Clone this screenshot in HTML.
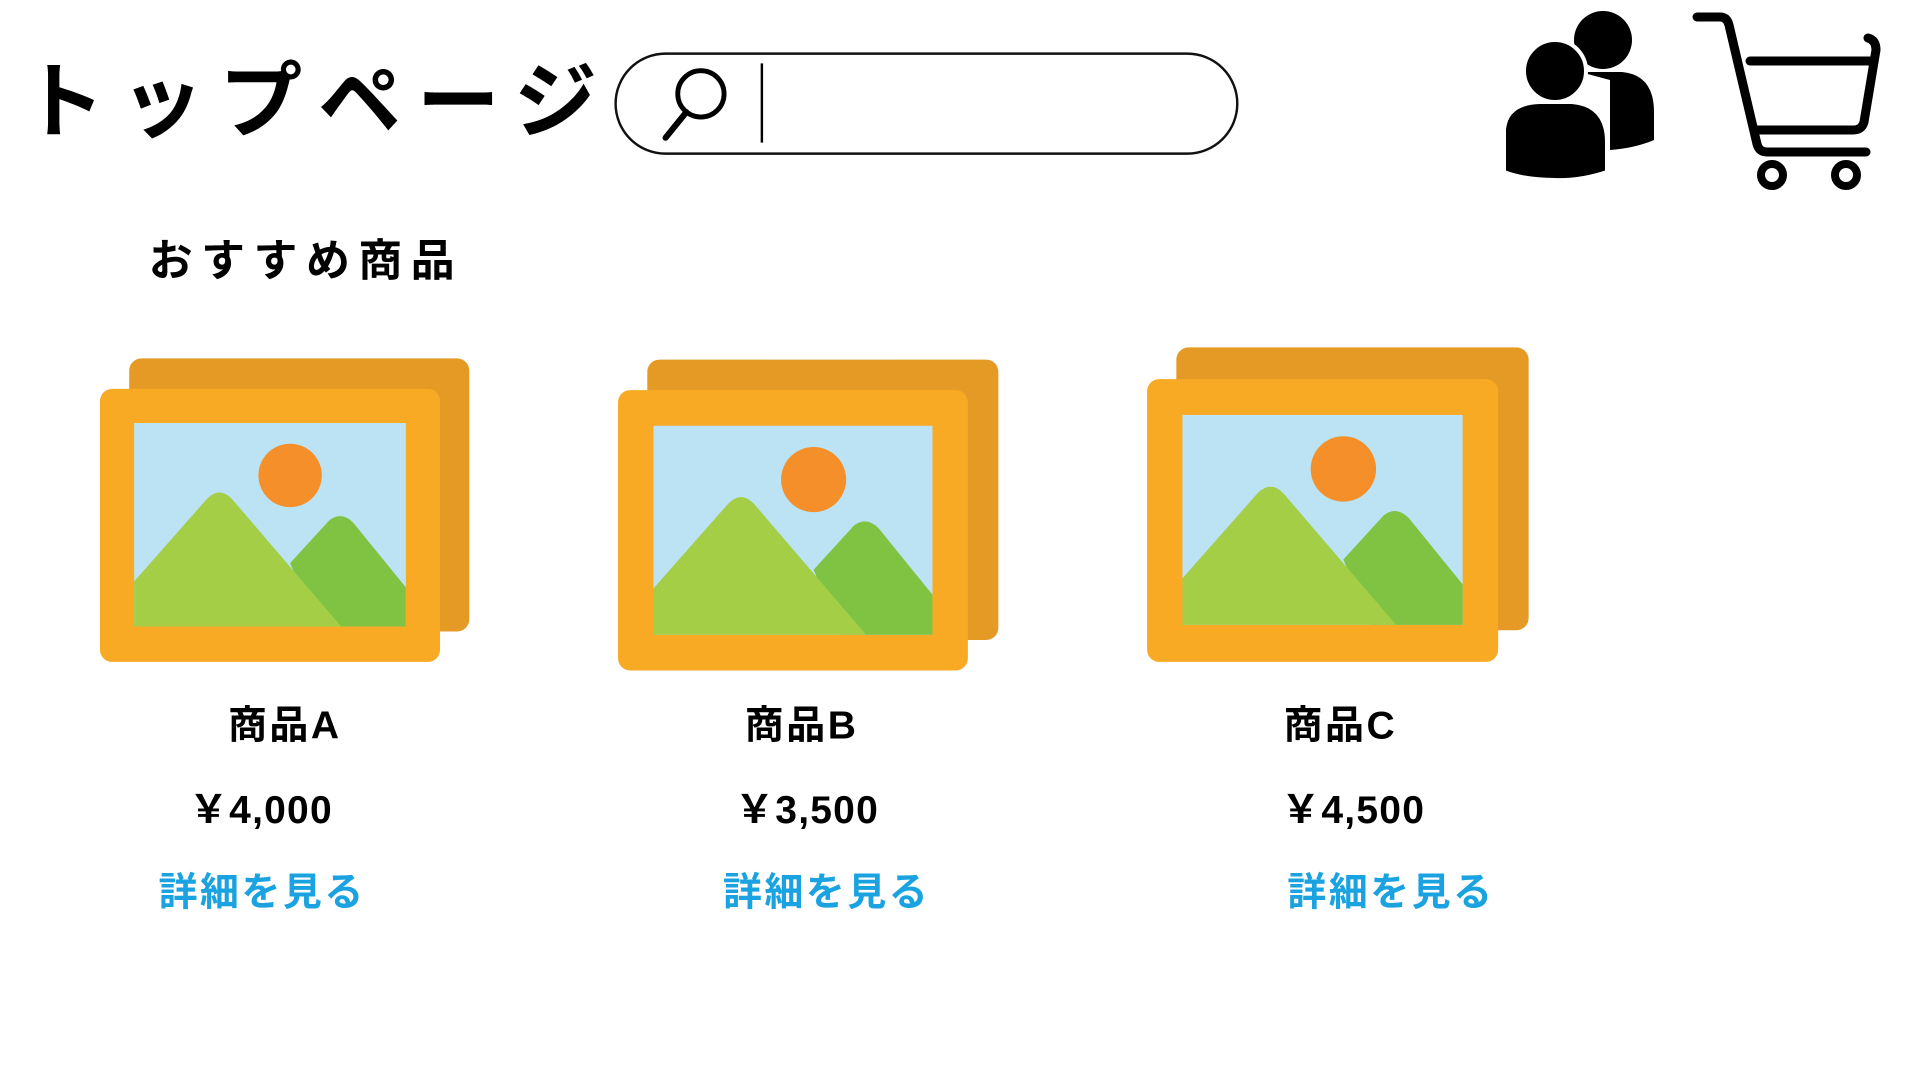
<!DOCTYPE html>
<html><head><meta charset="utf-8"><style>
body{margin:0;background:#fff;width:1911px;height:1071px;overflow:hidden;font-family:"Liberation Sans","Noto Sans CJK JP",sans-serif;}
#w{position:absolute;left:0;top:0;width:1560px;height:874px;transform:scale(1.219);transform-origin:0 0;}
.t{position:absolute;font-weight:bold;white-space:nowrap;}
</style></head><body>
<div id="w">
<div class="t" style="left:18px;top:28px;font-size:68px;letter-spacing:13px;">トップページ</div>
<div style="position:absolute;left:504px;top:43px;width:508px;height:80px;border:2px solid #111;border-radius:42px;"></div>
<svg style="position:absolute;left:0;top:0" width="1560" height="874">
<circle cx="575" cy="77" r="19" fill="none" stroke="#000" stroke-width="4"/>
<line x1="563" y1="92" x2="546" y2="113" stroke="#000" stroke-width="5" stroke-linecap="round"/>
<line x1="625" y1="52" x2="625" y2="117" stroke="#000" stroke-width="2"/>
<g>
<rect x="106" y="294" width="279" height="224" rx="10" fill="#e59a26"/>
<rect x="82" y="319" width="279" height="224" rx="10" fill="#f8aa24"/>
<svg x="110" y="347" width="223" height="167" viewBox="0 0 223 167"><rect width="223" height="167" fill="#bbe3f3"/><circle cx="128" cy="43" r="26" fill="#f58f2a"/><path d="M128,115 L160,80 Q170,72 180,82 L223,135 V167 H150 Z" fill="#80c242"/><path d="M0,130 L60,62 Q70,52 80,62 L170,167 H0 Z" fill="#a3ce46"/></svg>
</g>
<g>
<rect x="531" y="295" width="288" height="230" rx="10" fill="#e59a26"/>
<rect x="507" y="320" width="287" height="230" rx="10" fill="#f8aa24"/>
<svg x="536" y="349" width="229" height="172" viewBox="0 0 223 167"><rect width="223" height="167" fill="#bbe3f3"/><circle cx="128" cy="43" r="26" fill="#f58f2a"/><path d="M128,115 L160,80 Q170,72 180,82 L223,135 V167 H150 Z" fill="#80c242"/><path d="M0,130 L60,62 Q70,52 80,62 L170,167 H0 Z" fill="#a3ce46"/></svg>
</g>
<g>
<rect x="965" y="285" width="289" height="232" rx="10" fill="#e59a26"/>
<rect x="941" y="311" width="288" height="232" rx="10" fill="#f8aa24"/>
<svg x="970" y="340" width="230" height="173" viewBox="0 0 223 167"><rect width="223" height="167" fill="#bbe3f3"/><circle cx="128" cy="43" r="26" fill="#f58f2a"/><path d="M128,115 L160,80 Q170,72 180,82 L223,135 V167 H150 Z" fill="#80c242"/><path d="M0,130 L60,62 Q70,52 80,62 L170,167 H0 Z" fill="#a3ce46"/></svg>
</g>
</svg>
<div class="t" style="left:122px;top:185px;font-size:36px;letter-spacing:7px;">おすすめ商品</div>
<div class="t" style="left:187px;top:570px;font-size:32px;letter-spacing:2px;">商品A</div>
<div class="t" style="left:611px;top:570px;font-size:32px;letter-spacing:2px;">商品B</div>
<div class="t" style="left:1053px;top:570px;font-size:32px;letter-spacing:2px;">商品C</div>
<div class="t" style="left:155px;top:639px;font-size:32px;letter-spacing:1px;">￥4,000</div>
<div class="t" style="left:603px;top:639px;font-size:32px;letter-spacing:1px;">￥3,500</div>
<div class="t" style="left:1051px;top:639px;font-size:32px;letter-spacing:1px;">￥4,500</div>
<div class="t" style="left:130px;top:707px;font-size:32px;letter-spacing:2px;color:#1aa3e0;">詳細を見る</div>
<div class="t" style="left:593px;top:707px;font-size:32px;letter-spacing:2px;color:#1aa3e0;">詳細を見る</div>
<div class="t" style="left:1056px;top:707px;font-size:32px;letter-spacing:2px;color:#1aa3e0;">詳細を見る</div>
</div>
<svg style="position:absolute;left:0;top:0" width="1911" height="1071">
<circle cx="1603" cy="40" r="29" fill="#000"/>
<path d="M1580,72 H1622 Q1654,75 1654,112 V140 Q1635,148 1610,150 V80 Z" fill="#000"/>
<circle cx="1555" cy="71" r="31" fill="#000" stroke="#fff" stroke-width="4"/>
<path d="M1504,130 Q1506,103 1540,102 H1572 Q1607,105 1607,142 V172 Q1580,181 1555,180 Q1525,180 1504,172 Z" fill="#000" stroke="#fff" stroke-width="4"/>
<g fill="none" stroke="#000" stroke-width="9" stroke-linecap="round" stroke-linejoin="round">
<path d="M1697,17 H1720 Q1727,17 1729,25 L1757,144 Q1759,152 1767,152 H1866"/>
<path d="M1750,61 H1870"/>
<path d="M1868,38 Q1876,40 1876,50 L1864,122 Q1862,130 1853,130 H1755"/>
<circle cx="1772" cy="175" r="11" stroke-width="8"/>
<circle cx="1846" cy="175" r="11" stroke-width="8"/>
</g>
</svg>
</body></html>
